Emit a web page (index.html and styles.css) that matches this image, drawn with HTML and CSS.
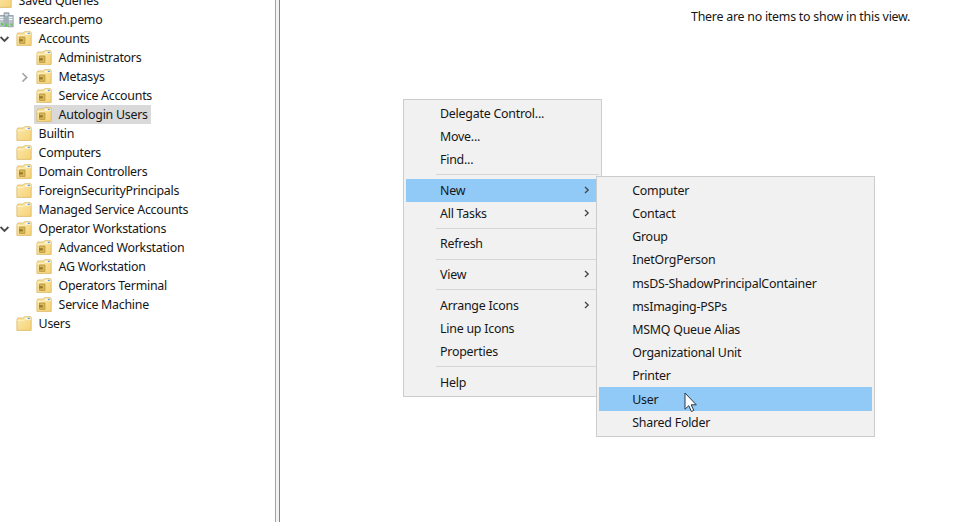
FILE: index.html
```html
<!DOCTYPE html>
<html lang="en">
<head>
<meta charset="utf-8">
<title>Active Directory Users and Computers</title>
<link rel="stylesheet" href="styles.css">
</head>
<body>
<svg class="defs" aria-hidden="true">
  <defs>
    <linearGradient id="fill" x1="0" y1="0" x2="1" y2="1"><stop offset="0" stop-color="#fce9ae"/><stop offset="1" stop-color="#f5d274"/></linearGradient>
    <symbol id="folder" viewBox="0 0 16 16"><path d="M.9 3.6 1.8 2h5.4l1.3-1.3h6l.7 1v12.7H.9z" fill="url(#fill)" stroke="#dbb866" stroke-width=".8"/><path d="M9 1.6h5.4v2H9z" fill="#f5f8fa"/><path d="M11.8 1.8h2v1.4h-2z" fill="#4d9ede"/><path d="M1.2 4.5h6.6l1.4-1h5.6" fill="none" stroke="#fff2c9" stroke-width=".8"/></symbol>
    <symbol id="ou" viewBox="0 0 16 16"><use href="#folder"/><path d="M3.5 6h5.4v6.4H3.5z" fill="#d6b95c" stroke="#b9963c" stroke-width=".9"/><path d="M3.2 8.2h3.6v2.2H3.2z" fill="#977726"/></symbol>
    <symbol id="down" viewBox="0 0 10 10"><path d="M.6 3 4.5 7l3.9-4" fill="none" stroke="#4a4a4a" stroke-width="1.8"/></symbol>
    <symbol id="right" viewBox="0 0 10 10"><path d="M2.5 1.2 6.7 5.4 2.5 9.6" fill="none" stroke="#a3a3a3" stroke-width="1.6"/></symbol>
    <symbol id="sub" viewBox="0 0 8 8"><path d="M2 1 5.2 4 2 7" fill="none" stroke="#444" stroke-width="1.3"/></symbol>
    <symbol id="domain" viewBox="0 0 18 16"><path d="M8 .8h5v10H8z" fill="#a9b6bd" stroke="#7b8b94" stroke-width=".7"/><path d="M3.4 3.5h4.8v10.8H3.4zM12 3.5h5.2v11.3H12z" fill="#b9c5cb" stroke="#7b8b94" stroke-width=".7"/><path d="M8 5h4v10H8z" fill="#a0adb5"/><path d="M8.7 2.8h3.6M4 5.5h3.4M12.8 5.5h3.6M4 7.5h3.4M12.8 7.5h3.6" stroke="#eff4f6"/><path d="M5 11h2v2H5zM9 12.5h2v2H9zM14.5 11.5h2v2h-2z" fill="#4fd633"/></symbol>
  </defs>
</svg>
<main class="window">
  <nav class="tree">
    <div class="node top"><i class="toggle"></i><svg class="icon"><use href="#folder"/></svg><span>Saved Queries</span></div>
    <div class="node top"><i class="toggle"></i><svg class="icon wide"><use href="#domain"/></svg><span>research.pemo</span></div>
    <div class="node"><svg class="toggle"><use href="#down"/></svg><svg class="icon"><use href="#ou"/></svg><span>Accounts</span></div>
    <div class="node child"><i class="toggle"></i><svg class="icon"><use href="#ou"/></svg><span>Administrators</span></div>
    <div class="node child"><svg class="toggle"><use href="#right"/></svg><svg class="icon"><use href="#ou"/></svg><span>Metasys</span></div>
    <div class="node child"><i class="toggle"></i><svg class="icon"><use href="#ou"/></svg><span>Service Accounts</span></div>
    <div class="node child"><i class="toggle"></i><div class="selected"><svg class="icon"><use href="#ou"/></svg><span>Autologin Users</span></div></div>
    <div class="node"><i class="toggle"></i><svg class="icon"><use href="#folder"/></svg><span>Builtin</span></div>
    <div class="node"><i class="toggle"></i><svg class="icon"><use href="#folder"/></svg><span>Computers</span></div>
    <div class="node"><i class="toggle"></i><svg class="icon"><use href="#ou"/></svg><span>Domain Controllers</span></div>
    <div class="node"><i class="toggle"></i><svg class="icon"><use href="#folder"/></svg><span>ForeignSecurityPrincipals</span></div>
    <div class="node"><i class="toggle"></i><svg class="icon"><use href="#folder"/></svg><span>Managed Service Accounts</span></div>
    <div class="node"><svg class="toggle"><use href="#down"/></svg><svg class="icon"><use href="#ou"/></svg><span>Operator Workstations</span></div>
    <div class="node child"><i class="toggle"></i><svg class="icon"><use href="#ou"/></svg><span>Advanced Workstation</span></div>
    <div class="node child"><i class="toggle"></i><svg class="icon"><use href="#ou"/></svg><span>AG Workstation</span></div>
    <div class="node child"><i class="toggle"></i><svg class="icon"><use href="#ou"/></svg><span>Operators Terminal</span></div>
    <div class="node child"><i class="toggle"></i><svg class="icon"><use href="#ou"/></svg><span>Service Machine</span></div>
    <div class="node"><i class="toggle"></i><svg class="icon"><use href="#folder"/></svg><span>Users</span></div>
  </nav>
  <div class="splitter"></div>
  <section class="content"><p class="empty">There are no items to show in this view.</p></section>
</main>
<div class="menu context">
  <div class="item">Delegate Control...</div>
  <div class="item">Move...</div>
  <div class="item">Find...</div>
  <div class="separator"></div>
  <div class="item active">New<svg class="arrow"><use href="#sub"/></svg></div>
  <div class="item">All Tasks<svg class="arrow"><use href="#sub"/></svg></div>
  <div class="separator"></div>
  <div class="item">Refresh</div>
  <div class="separator"></div>
  <div class="item">View<svg class="arrow"><use href="#sub"/></svg></div>
  <div class="separator"></div>
  <div class="item">Arrange Icons<svg class="arrow"><use href="#sub"/></svg></div>
  <div class="item">Line up Icons</div>
  <div class="item">Properties</div>
  <div class="separator"></div>
  <div class="item">Help</div>
</div>
<div class="menu submenu">
  <div class="item">Computer</div>
  <div class="item">Contact</div>
  <div class="item">Group</div>
  <div class="item">InetOrgPerson</div>
  <div class="item">msDS-ShadowPrincipalContainer</div>
  <div class="item">msImaging-PSPs</div>
  <div class="item">MSMQ Queue Alias</div>
  <div class="item">Organizational Unit</div>
  <div class="item">Printer</div>
  <div class="item active">User</div>
  <div class="item">Shared Folder</div>
</div>
<svg class="cursor" viewBox="0 0 14 21"><path d="M1 1v16.2l3.8-3.5 2.6 5.8 2.4-1.1-2.6-5.6h5.1z" fill="#fff" stroke="#2a3846"/></svg>
</body>
</html>
```

FILE: styles.css
```css
* { box-sizing: border-box; }
body {
  margin: 0;
  overflow: hidden;
  background: #fff;
  color: #161616;
  font: 12.4px/19px "Noto Sans", "Open Sans", sans-serif;
  letter-spacing: -0.26px;
  white-space: nowrap;
}
.defs { position: absolute; width: 0; height: 0; }
.window { display: flex; height: 522px; overflow: hidden; }
.tree { width: 275px; flex: none; margin-top: -9px; }
.node { display: flex; align-items: center; height: 19px; }
.node.top { margin-left: -20px; }
.node.child { padding-left: 20px; }
.toggle { width: 10px; height: 10px; flex: none; margin-right: 6px; }
.icon { width: 16px; height: 16px; flex: none; margin-right: 6.6px; }
.icon.wide { width: 18px; margin-right: 4.6px; }
.selected {
  display: flex;
  align-items: center;
  width: 117px;
  height: 19px;
  margin-left: -2px;
  padding-left: 2px;
  background: #d9d9d9;
}
.splitter {
  width: 5px;
  flex: none;
  background: #f0f2f4;
  border-left: 1px solid #a0a4a8;
  border-right: 1px solid #80868c;
}
.content { flex: 1; }
.empty { margin: 7px 0 0; padding-left: 411px; letter-spacing: -0.24px; }
.menu {
  position: absolute;
  background: #f1f1f1;
  border: 1px solid #ccc;
  letter-spacing: -0.23px;
}
.context { left: 403px; top: 99px; width: 199px; height: 298px; padding: 1.6px 2px; }
.submenu { left: 595.6px; top: 176px; width: 279px; height: 261px; padding: 1.8px 2px; }
.item {
  display: flex;
  align-items: center;
  justify-content: space-between;
  height: 23.2px;
  padding: 0 8px 0 34px;
}
.submenu .item { padding-left: 33.6px; }
.active { background: #91c9f7; }
.separator { height: 7.4px; padding-top: 3.3px; margin-left: 30px; }
.separator::before { content: ""; display: block; height: 1px; background: #d5d5d5; }
.arrow { width: 8px; height: 8px; }
.cursor { position: absolute; left: 683.5px; top: 392px; width: 14px; height: 21px; }
```
